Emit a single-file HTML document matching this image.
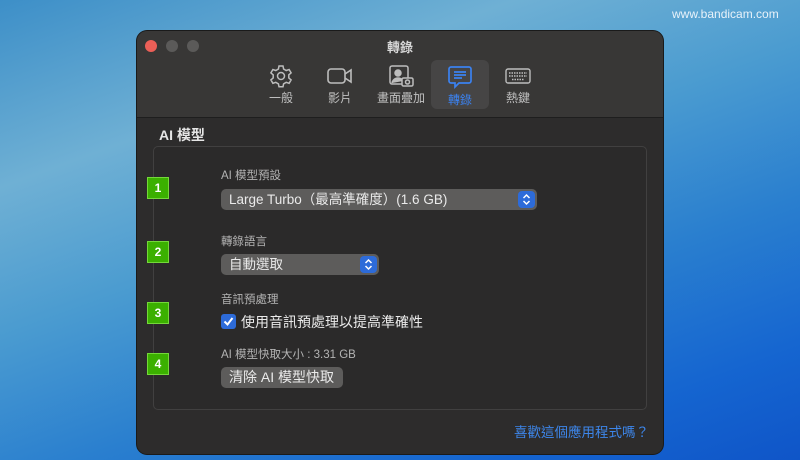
<!DOCTYPE html>
<html><head><meta charset="utf-8"><style>
*{margin:0;padding:0;box-sizing:border-box}
body{width:800px;height:460px;overflow:hidden;position:relative;font-family:"Liberation Sans","Noto Sans CJK TC",sans-serif;
background:linear-gradient(160deg,#3d8fc8 0%,#6fb0d4 25%,#4a9bd0 45%,#2a7fcf 65%,#1565d0 85%,#0f55c8 100%);}
.wm{position:absolute;left:672px;top:7px;color:#e8f2fa;font-size:12px;}
.win{position:absolute;left:137px;top:31px;width:526px;height:423px;background:#2d2c2c;border-radius:10px;overflow:hidden;box-shadow:0 0 0 1px #1a1a1a}
.head{position:absolute;left:0;top:0;width:526px;height:87px;background:#383736;border-bottom:1px solid #1e1e1e}
.dot{position:absolute;top:9px;width:12px;height:12px;border-radius:50%;background:#5b5a59}
.title{position:absolute;top:6px;width:100%;text-align:center;color:#d8d8d8;font-size:13px;font-weight:bold}
.tab{position:absolute;top:29px;width:58px;height:49px;text-align:center;color:#c0c0c0;font-size:12px}
.tab svg{display:block;margin:4px auto 1px}
.sel{background:#464545;border-radius:6px;color:#3b82f0}
.h2{position:absolute;left:22px;top:94px;color:#e6e6e6;font-size:14px;font-weight:bold}
.box{position:absolute;left:16px;top:115px;width:494px;height:264px;border:1px solid #414040;border-radius:5px;background:#2b2a2a}
.badge{position:absolute;left:10px;width:22px;height:22px;background:#3bb000;border:1px solid #74d83a;color:#fff;font-weight:bold;font-size:12px;text-align:center;line-height:20px}
.lbl{position:absolute;left:84px;color:#b4b4b4;font-size:11.5px}
.pop{position:absolute;left:84px;height:21px;background:#5d5c5b;border-radius:5px;color:#eaeaea;font-size:13.5px;line-height:21px;padding-left:8px;white-space:nowrap}
.arr{position:absolute;right:2px;top:2px;width:17px;height:17px;background:#2d6bd9;border-radius:4px}
.btn{position:absolute;left:84px;top:336px;width:122px;height:21px;background:#5d5c5b;border-radius:5px;color:#eaeaea;font-size:14px;line-height:21px;padding-left:8px;white-space:nowrap}
.link{position:absolute;right:14px;top:390px;color:#3d86ea;font-size:13.5px}
</style></head><body>
<div class="wm">www.bandicam.com</div>
<div class="win">
<div class="head">
<div class="dot" style="left:8px;background:#ec5f57"></div><div class="dot" style="left:29px"></div><div class="dot" style="left:50px"></div>
<div class="title">轉錄</div>
<div class="tab" style="left:115px"><svg width="24" height="24" viewBox="0 0 24 24" fill="none" stroke="#bdbdbd" stroke-width="1.5"><circle cx="12" cy="12" r="3.5"/><path d="M10 2h4l.6 3 2.6 1.5 2.9-1 2 3.4-2.3 2v3l2.3 2-2 3.4-2.9-1-2.6 1.5-.6 3h-4l-.6-3-2.6-1.5-2.9 1-2-3.4 2.3-2v-3l-2.3-2 2-3.4 2.9 1L9.4 5z"/></svg>一般</div>
<div class="tab" style="left:174px"><svg width="28" height="24" viewBox="0 0 28 24" fill="none" stroke="#bdbdbd" stroke-width="1.6"><rect x="2" y="5" width="17" height="14" rx="3"/><path d="M19 10l6-4v12l-6-4"/></svg>影片</div>
<div class="tab" style="left:234px;width:60px"><svg width="28" height="24" viewBox="0 0 28 24" fill="none" stroke="#bdbdbd" stroke-width="1.5"><rect x="3" y="2" width="18" height="18" rx="2"/><circle cx="11" cy="9" r="3" fill="#bdbdbd"/><path d="M5 19c1-4 4-5 6-5s4 1 5 3" fill="#bdbdbd"/><rect x="15" y="14" width="11" height="8" rx="1.5" fill="#383736"/><circle cx="20.5" cy="18" r="2"/></svg>畫面疊加</div>
<div class="tab sel" style="left:294px"><svg width="26" height="26" viewBox="0 0 26 26" fill="none" stroke="#3b82f0" stroke-width="1.7"><path d="M4 3h18a2 2 0 012 2v12a2 2 0 01-2 2H12l-4 4v-4H4a2 2 0 01-2-2V5a2 2 0 012-2z"/><path d="M7 8h12M7 11h12M7 14h8"/></svg>轉錄</div>
<div class="tab" style="left:352px"><svg width="28" height="24" viewBox="0 0 28 24" fill="none" stroke="#bdbdbd" stroke-width="1.4"><rect x="2" y="5" width="24" height="14" rx="2"/><path d="M5 9h18M5 12h18M8 15.5h12" stroke-dasharray="1.5 1"/></svg>熱鍵</div>
</div>
<div class="h2">AI 模型</div>
<div class="box"></div>
<div class="badge" style="top:146px">1</div>
<div class="badge" style="top:210px">2</div>
<div class="badge" style="top:271px">3</div>
<div class="badge" style="top:322px">4</div>
<div class="lbl" style="top:136px">AI 模型預設</div>
<div class="pop" style="top:158px;width:316px">Large Turbo（最高準確度）(1.6 GB)<div class="arr"><svg width="17" height="17" viewBox="0 0 17 17" fill="none" stroke="#fff" stroke-width="1.5"><path d="M5.5 7l3-3 3 3M5.5 10l3 3 3-3"/></svg></div></div>
<div class="lbl" style="top:202px">轉錄語言</div>
<div class="pop" style="top:223px;width:158px">自動選取<div class="arr"><svg width="17" height="17" viewBox="0 0 17 17" fill="none" stroke="#fff" stroke-width="1.5"><path d="M5.5 7l3-3 3 3M5.5 10l3 3 3-3"/></svg></div></div>
<div class="lbl" style="top:260px">音訊預處理</div>
<div style="position:absolute;left:84px;top:283px;width:15px;height:15px;background:#2d6bd9;border-radius:3px"><svg width="15" height="15" viewBox="0 0 15 15" fill="none" stroke="#fff" stroke-width="2"><path d="M3.5 7.5l3 3 5-6.5"/></svg></div>
<div style="position:absolute;left:104px;top:281px;color:#eaeaea;font-size:14px">使用音訊預處理以提高準確性</div>
<div class="lbl" style="top:315px">AI 模型快取大小 : 3.31 GB</div>
<div class="btn">清除 AI 模型快取</div>
<div class="link">喜歡這個應用程式嗎？</div>
</div>
</body></html>
